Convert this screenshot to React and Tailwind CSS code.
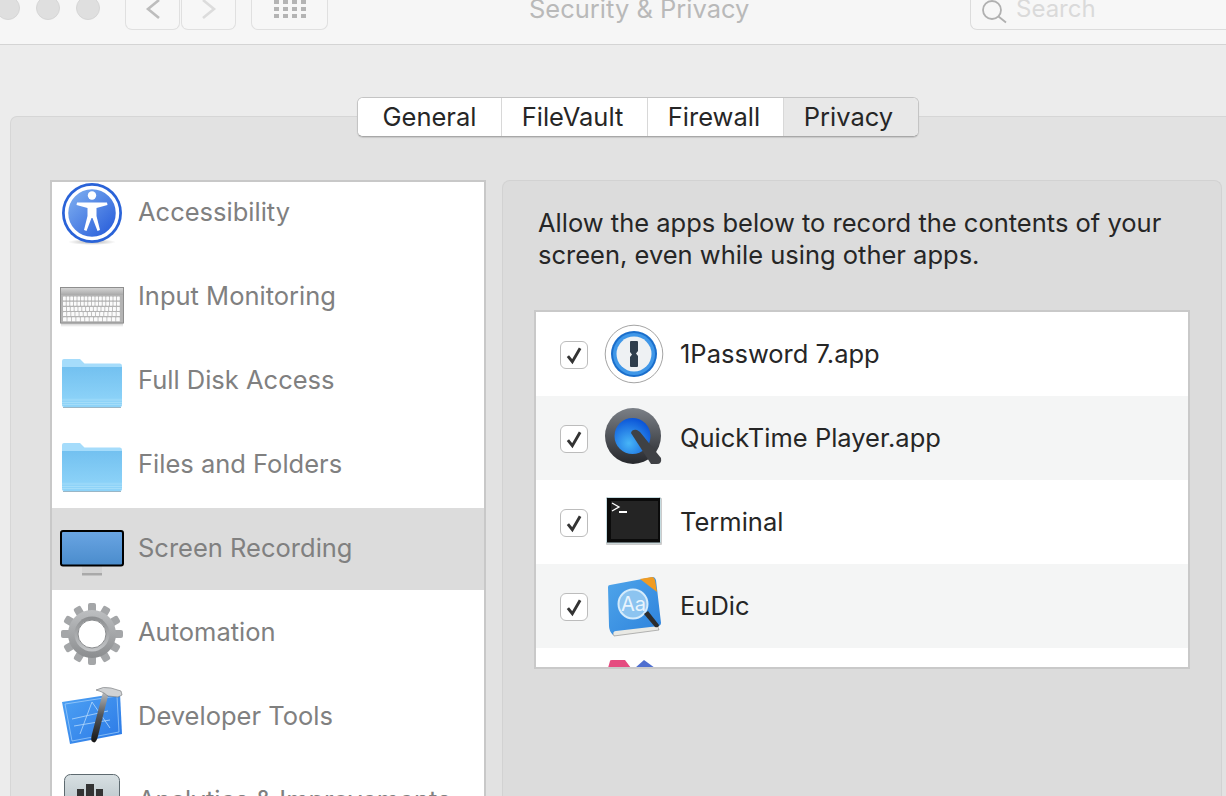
import { Fragment } from 'react'

function AccessibilityIcon() {
  return (
    <svg width="64" height="64" viewBox="0 0 64 64" className="overflow-visible">
      <defs>
        <linearGradient id="accBlue" x1="0" y1="0" x2="1" y2="1">
          <stop offset="0" stopColor="#86b6f2" />
          <stop offset="1" stopColor="#1f55d8" />
        </linearGradient>
        <radialGradient id="accShadow">
          <stop offset="0" stopColor="#000" stopOpacity="0.3" />
          <stop offset="1" stopColor="#000" stopOpacity="0" />
        </radialGradient>
      </defs>
      <ellipse cx="32" cy="62" rx="24" ry="3" fill="url(#accShadow)" />
      <circle cx="32" cy="33" r="30" fill="#2a63d8" />
      <circle cx="32" cy="33" r="25.500" fill="url(#accBlue)" stroke="#fff" strokeWidth="3.5" />
      <circle cx="32" cy="15.5" r="4.2" fill="#fff" />
      <path d="M17 22.5 L47 22.5 L47.500 25 L36.500 28 L36.500 36 L40 50 L37.500 51 L32.500 38 L31.500 38 L26.500 51 L24 50 L27.500 36 L27.500 28 L16.500 25 Z" fill="#fff" />
    </svg>
  )
}

function KeyboardIcon() {
  const rows = [
    [3, 16, 3.600],
    [3, 16, 3.600],
    [3, 15, 3.840],
    [3, 14, 4.120],
    [3, 13, 4.430],
  ]
  return (
    <svg width="64" height="64" viewBox="0 0 64 64" className="overflow-visible">
      <defs>
        <linearGradient id="kbTop" x1="0" y1="0" x2="0" y2="1">
          <stop offset="0" stopColor="#d4d4d4" />
          <stop offset="1" stopColor="#a9a9a9" />
        </linearGradient>
        <linearGradient id="kbShade" x1="0" y1="0" x2="0" y2="1">
          <stop offset="0" stopColor="#000" stopOpacity="0.22" />
          <stop offset="1" stopColor="#000" stopOpacity="0" />
        </linearGradient>
      </defs>
      <rect x="1" y="59" width="62" height="4" fill="url(#kbShade)" />
      <rect x="0.500" y="23.500" width="63" height="35.500" fill="#b4b4b4" stroke="#8e8e8e" />
      <rect x="1" y="24" width="62" height="7" fill="url(#kbTop)" />
      {rows.map((r, i) => (
        <Fragment key={i}>
          {Array.from({ length: r[1] }).map((_, j) => (
            <rect key={j} x={r[0] + j * r[2]} y={32.500 + i * 5.2} width={r[2] - 0.8} height="4" fill="#fbfbfb" rx="0.4" />
          ))}
        </Fragment>
      ))}
    </svg>
  )
}

function FolderIcon({ id }) {
  return (
    <svg width="64" height="64" viewBox="0 0 64 64" className="overflow-visible">
      <defs>
        <linearGradient id={id} x1="0" y1="0" x2="0" y2="1">
          <stop offset="0" stopColor="#73c1f0" />
          <stop offset="1" stopColor="#8cd2f8" />
        </linearGradient>
      </defs>
      <path d="M2 13 Q2 11 4 11 L20 11 L24.500 15.500 L60 15.500 Q62 15.500 62 18 L62 50 L2 50 Z" fill="#a5dcfb" />
      <rect x="2" y="19" width="60" height="33" fill={`url(#${id})`} />
      <path d="M2 50 L62 50 L62 57 Q62 59 60 59 L4 59 Q2 59 2 57 Z" fill="#8ed3f8" />
      <path d="M2 52 H62 M2 54.500 H62 M2 56.500 H62" stroke="#a9dff9" strokeWidth="0.8" />
      <path d="M3 59.500 H61" stroke="#9ab6c6" strokeWidth="1" />
    </svg>
  )
}

function MonitorIcon() {
  return (
    <svg width="64" height="64" viewBox="0 0 64 64" className="overflow-visible">
      <defs>
        <linearGradient id="screenBlue" x1="0" y1="0" x2="0" y2="1">
          <stop offset="0" stopColor="#6aa5e3" />
          <stop offset="1" stopColor="#4a8ccc" />
        </linearGradient>
      </defs>
      <rect x="22" y="50" width="20" height="7" fill="#d3d3d3" />
      <rect x="22" y="57" width="20" height="2.500" fill="#a9a9a9" />
      <rect x="1" y="15" width="62" height="34.500" rx="2" fill="url(#screenBlue)" stroke="#000" strokeWidth="2" />
    </svg>
  )
}

function GearIcon() {
  const teeth = Array.from({ length: 12 }).map((_, i) => i * 30)
  return (
    <svg width="64" height="64" viewBox="0 0 64 64" className="overflow-visible">
      <defs>
        <linearGradient id="gearGrey" x1="0" y1="0" x2="0" y2="1">
          <stop offset="0" stopColor="#bdbfc1" />
          <stop offset="1" stopColor="#8b8d8f" />
        </linearGradient>
        <linearGradient id="gearRing" x1="0" y1="0" x2="0" y2="1">
          <stop offset="0" stopColor="#8b8d8f" />
          <stop offset="1" stopColor="#c4c6c8" />
        </linearGradient>
      </defs>
      {teeth.map((a) => (
        <rect key={a} x="28" y="3" width="8" height="14" rx="2" fill="#a4a6a8" transform={`rotate(${a} 32 34)`} />
      ))}
      <circle cx="32" cy="34" r="24" fill="url(#gearGrey)" />
      <circle cx="32" cy="34" r="17.500" fill="url(#gearRing)" />
      <circle cx="32" cy="34" r="14" fill="#fff" stroke="#8a8c8e" strokeWidth="1" />
    </svg>
  )
}

function XcodeIcon() {
  return (
    <svg width="64" height="64" viewBox="0 0 64 64" className="overflow-visible">
      <defs>
        <linearGradient id="xcBlue" x1="0" y1="0" x2="1" y2="1">
          <stop offset="0" stopColor="#4fa3f4" />
          <stop offset="1" stopColor="#2a78e6" />
        </linearGradient>
        <linearGradient id="xcHandle" x1="0" y1="0" x2="0" y2="1">
          <stop offset="0" stopColor="#b9bcbf" />
          <stop offset="0.45" stopColor="#55585c" />
          <stop offset="1" stopColor="#151515" />
        </linearGradient>
      </defs>
      <path d="M2 18 L60 9 L62 50 L10 60 Z" fill="url(#xcBlue)" />
      <path d="M5 20 L57 12 L59 48 L12 57 Z" fill="none" stroke="#a8d2fa" strokeWidth="0.7" />
      <path d="M20 50 L32 18 L50 44 M12 35 L48 27 M14 42 L50 36" fill="none" stroke="#b5d9fb" strokeWidth="0.8" />
      <path d="M43 8 L48 12 L38 52 Q36 60 33 58 Q30 57 32 50 Z" fill="url(#xcHandle)" />
      <path d="M36 6 Q43 2 51 4 L61 7 L62 11 L58 13 L48 12 L44 9 Q40 7 36 6 Z" fill="#d0d2d4" stroke="#6f7275" strokeWidth="0.6" />
    </svg>
  )
}

function AnalyticsIcon() {
  return (
    <svg width="64" height="64" viewBox="0 0 64 64" className="overflow-visible">
      <defs>
        <linearGradient id="anGrey" x1="0" y1="0" x2="0" y2="1">
          <stop offset="0" stopColor="#d8e0e3" />
          <stop offset="1" stopColor="#a3b0b6" />
        </linearGradient>
      </defs>
      <rect x="4.500" y="6.500" width="55" height="55" rx="6" fill="url(#anGrey)" stroke="#5e6a70" />
      <rect x="17" y="21" width="7" height="20" fill="#333" />
      <rect x="26" y="16" width="8" height="25" fill="#333" />
      <rect x="36" y="21" width="7" height="20" fill="#333" />
    </svg>
  )
}

function OnePasswordIcon() {
  return (
    <svg width="60" height="60" viewBox="0 0 60 60" className="overflow-visible">
      <circle cx="30" cy="30" r="28.800" fill="#fff" stroke="#8d8d8d" strokeWidth="0.8" />
      <circle cx="30" cy="30" r="23" fill="#1a6ecb" />
      <circle cx="30" cy="30" r="21" fill="#3f97e8" />
      <circle cx="30" cy="30" r="17.500" fill="#eef1f3" />
      <path d="M26 18 Q26 17 27 17 L33 17 Q34 17 34 18 L34 27 L32 29.500 L34 32 L34 42 Q34 43 33 43 L27 43 Q26 43 26 42 L26 33 L28 30.500 L26 28 Z" fill="#2f3e4c" />
    </svg>
  )
}

function QuickTimeIcon() {
  return (
    <svg width="60" height="60" viewBox="0 0 60 60" className="overflow-visible">
      <defs>
        <linearGradient id="qtRing" x1="0" y1="0" x2="0" y2="1">
          <stop offset="0" stopColor="#7b8087" />
          <stop offset="1" stopColor="#26282c" />
        </linearGradient>
        <radialGradient id="qtBlue" cx="0.4" cy="0.7" r="0.7">
          <stop offset="0" stopColor="#47b5f7" />
          <stop offset="1" stopColor="#0b55d8" />
        </radialGradient>
      </defs>
      <circle cx="29" cy="28" r="28" fill="url(#qtRing)" />
      <circle cx="28.500" cy="28" r="18" fill="url(#qtBlue)" />
      <path d="M27 25 Q28 21 33 22 L36 24 L57 50 Q58 56 53 56 L47 56 Z" fill="#3f4145" />
    </svg>
  )
}

function TerminalIcon() {
  return (
    <svg width="60" height="60" viewBox="0 0 60 60" className="overflow-visible">
      <rect x="2" y="6" width="56" height="47" fill="#000" opacity="0.2" rx="1" />
      <rect x="2.500" y="5.500" width="54" height="45.500" rx="1" fill="#0b0b0b" stroke="#c5dbe0" strokeWidth="1" />
      <rect x="7" y="9" width="47" height="38" fill="#242424" />
      <path d="M8 11 L15 15 L8 19" fill="none" stroke="#fff" strokeWidth="1.300" />
      <rect x="15" y="19" width="8" height="2" fill="#fff" />
    </svg>
  )
}

function EuDicIcon() {
  return (
    <svg width="60" height="60" viewBox="0 0 60 60" className="overflow-visible">
      <defs>
        <linearGradient id="euBlue" x1="0" y1="0" x2="1" y2="1">
          <stop offset="0" stopColor="#4fa5ea" />
          <stop offset="1" stopColor="#2d82dc" />
        </linearGradient>
      </defs>
      <path d="M6 50 L10 60 L55 54 L52 46 Z" fill="#e9e9e4" stroke="#888" strokeWidth="0.6" />
      <path d="M4 11 Q4 9 6 9 L49 1 Q51 1 52 4 L57 47 Q57 49 55 50 L12 55 Q9 55 9 59 Q5 55 5 50 Z" fill="url(#euBlue)" />
      <path d="M36 3 L48 1 Q50 1 51 4 L53 16 Z" fill="#f09b22" />
      <circle cx="29" cy="28" r="14.500" fill="#8cc4f0" stroke="#d4ebfb" strokeWidth="2" />
      <text x="17" y="35" fontFamily="Inter, sans-serif" fontSize="20" fill="#e8f4fd">Aa</text>
      <path d="M40 38 L44 35 L55 49 Q55 52 51 51 Z" fill="#2c2c2c" />
    </svg>
  )
}

function PeekIcon() {
  return (
    <svg width="60" height="8" viewBox="0 0 60 8" className="overflow-visible">
      <path d="M4 8 L6 1 Q6 0 8 0 L21 0 L27 8 Z" fill="#e54c80" />
      <path d="M31 8 L40 0 L51 8 Z" fill="#4f6fd0" />
    </svg>
  )
}

const sideRows = [
  { label: 'Accessibility', icon: <AccessibilityIcon /> },
  { label: 'Input Monitoring', icon: <KeyboardIcon /> },
  { label: 'Full Disk Access', icon: <FolderIcon id="folderA" /> },
  { label: 'Files and Folders', icon: <FolderIcon id="folderB" /> },
  { label: 'Screen Recording', icon: <MonitorIcon />, selected: true },
  { label: 'Automation', icon: <GearIcon /> },
  { label: 'Developer Tools', icon: <XcodeIcon /> },
  { label: 'Analytics & Improvements', icon: <AnalyticsIcon /> },
]

const appRows = [
  { name: '1Password 7.app', icon: <OnePasswordIcon /> },
  { name: 'QuickTime Player.app', icon: <QuickTimeIcon />, alt: true },
  { name: 'Terminal', icon: <TerminalIcon /> },
  { name: 'EuDic', icon: <EuDicIcon />, alt: true },
]

const tabs = [
  { label: 'General', w: 'w-[143px]', pad: 'pr-0' },
  { label: 'FileVault', w: 'w-[146px]', pad: 'pr-[4px]' },
  { label: 'Firewall', w: 'w-[136px]', pad: 'pr-[3px]' },
  { label: 'Privacy', w: 'w-[135px]', pad: 'pr-[5px]', active: true },
]

export default function App() {
  return (
    <div className="h-[796px] w-[1226px] overflow-hidden flex flex-col bg-[#ececec] font-['Inter',sans-serif] text-[25.5px]">
      {/* Toolbar, cut off at the top of the shot */}
      <div className="h-[45px] shrink-0 flex items-end pb-[14px] bg-[#f6f6f6] border-b border-[#d4d4d4] overflow-hidden">
        <div className="flex gap-[16px] -ml-[4px] mb-[10px] mr-[26px] shrink-0">
          <div className="w-[24px] h-[24px] rounded-full bg-[#dfdfdf] border border-[#d6d6d6]" />
          <div className="w-[24px] h-[24px] rounded-full bg-[#dfdfdf] border border-[#d6d6d6]" />
          <div className="w-[24px] h-[24px] rounded-full bg-[#dfdfdf] border border-[#d6d6d6]" />
        </div>
        <div className="w-[55px] h-[40px] -ml-[1px] shrink-0 rounded-b-[7px] border border-t-0 border-[#e0e0e0] bg-[#f7f7f7] flex items-start justify-center pt-[9px]">
          <svg width="16" height="22" viewBox="0 0 16 22" fill="none" stroke="#bdbdbd" strokeWidth="2.600"><path d="M14 1 L3 10 L14 19" /></svg>
        </div>
        <div className="w-[55px] h-[40px] ml-[1px] shrink-0 rounded-b-[7px] border border-t-0 border-[#e0e0e0] bg-[#f7f7f7] flex items-start justify-center pt-[9px]">
          <svg width="16" height="22" viewBox="0 0 16 22" fill="none" stroke="#dcdcdc" strokeWidth="2.600"><path d="M2 1 L13 10 L2 19" /></svg>
        </div>
        <div className="w-[77px] h-[40px] ml-[15px] shrink-0 rounded-b-[7px] border border-t-0 border-[#e0e0e0] bg-[#f7f7f7] flex items-start justify-center pt-[10px]">
          <div className="grid grid-cols-4 gap-x-[4px] gap-y-[3px]">
            {Array.from({ length: 12 }).map((_, i) => (
              <span key={i} className="w-[5px] h-[4px] bg-[#b4b4b4]" />
            ))}
          </div>
        </div>
        <div className="w-[220px] ml-[201px] mb-[6px] shrink-0 text-center whitespace-nowrap text-[#b9b9b9] text-[25.5px] leading-[30px]">
          Security &amp; Privacy
        </div>
        <div className="w-[300px] h-[40px] ml-[221px] shrink-0 rounded-bl-[7px] border-l border-b border-[#dcdcdc] bg-[#f7f7f7] flex items-end pl-[10px] pb-[6px] gap-[9px]">
          <svg width="26" height="24" viewBox="0 0 26 24" fill="none" stroke="#b0b0b0" strokeWidth="1.800" className="-mb-[1px]"><circle cx="11" cy="10" r="9" /><path d="M17.500 16.500 L25 22.500" /></svg>
          <span className="text-[#dadada] text-[24px] leading-[28px]">Search</span>
        </div>
      </div>

      {/* Tabs sit on top of the panel edge */}
      <div className="flex pl-[357px] mt-[52px] -mb-[21px] relative z-10 shrink-0">
        <div className="flex h-[40px] rounded-[6px] border border-[#c4c4c4] border-b-[#a8a8a8] bg-white shadow-[0_1px_1px_rgba(0,0,0,0.12)] overflow-hidden">
          {tabs.map((t, i) => (
            <div
              key={t.label}
              className={`${t.w} ${t.pad} flex items-center justify-center pt-[1px] text-[#262626] ${i > 0 ? 'border-l border-[#d8d8d8]' : ''} ${t.active ? 'bg-[#e8e8e8]' : 'bg-white'}`}
            >
              {t.label}
            </div>
          ))}
        </div>
      </div>

      {/* Tab panel */}
      <div className="flex-1 min-h-0 ml-[10px] rounded-tl-[7px] border-l border-t border-[#d6d6d6] bg-[#e2e2e2] pl-[39px] pr-[4px] pt-[63px] flex gap-[16px]">
        <div className="w-[436px] shrink-0 border-2 border-b-0 border-[#c8c8c8] bg-white overflow-hidden">
          <div className="-mt-[12px]">
            {sideRows.map((r) => (
              <div key={r.label} className={`h-[84px] flex items-center ${r.selected ? 'pt-[2px]' : ''}`}>
                <div className={`w-full flex items-center pl-[8px] gap-[14px] ${r.selected ? 'h-[82px] bg-[#dcdcdc]' : 'h-full'}`}>
                  <div className={`w-[64px] h-[64px] shrink-0 ${r.selected ? '-mt-[2px]' : ''}`}>{r.icon}</div>
                  <span className={`text-[#808080] whitespace-nowrap ${r.selected ? '-mt-[2px]' : ''}`}>{r.label}</span>
                </div>
              </div>
            ))}
          </div>
        </div>

        <div className="flex-1 rounded-t-[8px] border border-b-0 border-[#d2d2d2] bg-[#dcdcdc] pl-[31px] pr-[31px] pt-[26px]">
          <p className="pl-[4px] text-[#262626] leading-[32px] whitespace-nowrap">
            Allow the apps below to record the contents of your
            <br />
            screen, even while using other apps.
          </p>
          <div className="mt-[39px] h-[359px] border-2 border-[#c9c9c9] bg-white overflow-hidden">
            {appRows.map((a) => (
              <div key={a.name} className={`h-[84px] flex items-center pl-[24px] ${a.alt ? 'bg-[#f4f5f5]' : 'bg-white'}`}>
                <div className="w-[28px] h-[28px] mt-[2px] shrink-0 rounded-[6px] border border-[#bcbcbc] bg-white flex items-center justify-center">
                  <svg width="20" height="20" viewBox="0 0 18 18" fill="none" stroke="#333333" strokeWidth="2.600"><path d="M3.500 10 L7.500 15 L14.500 3" /></svg>
                </div>
                <div className="w-[60px] h-[60px] ml-[16px] shrink-0">{a.icon}</div>
                <span className="ml-[16px] text-[#262626] whitespace-nowrap">{a.name}</span>
              </div>
            ))}
            <div className="pl-[68px] pt-[12px]">
              <PeekIcon />
            </div>
          </div>
        </div>
      </div>
    </div>
  )
}
